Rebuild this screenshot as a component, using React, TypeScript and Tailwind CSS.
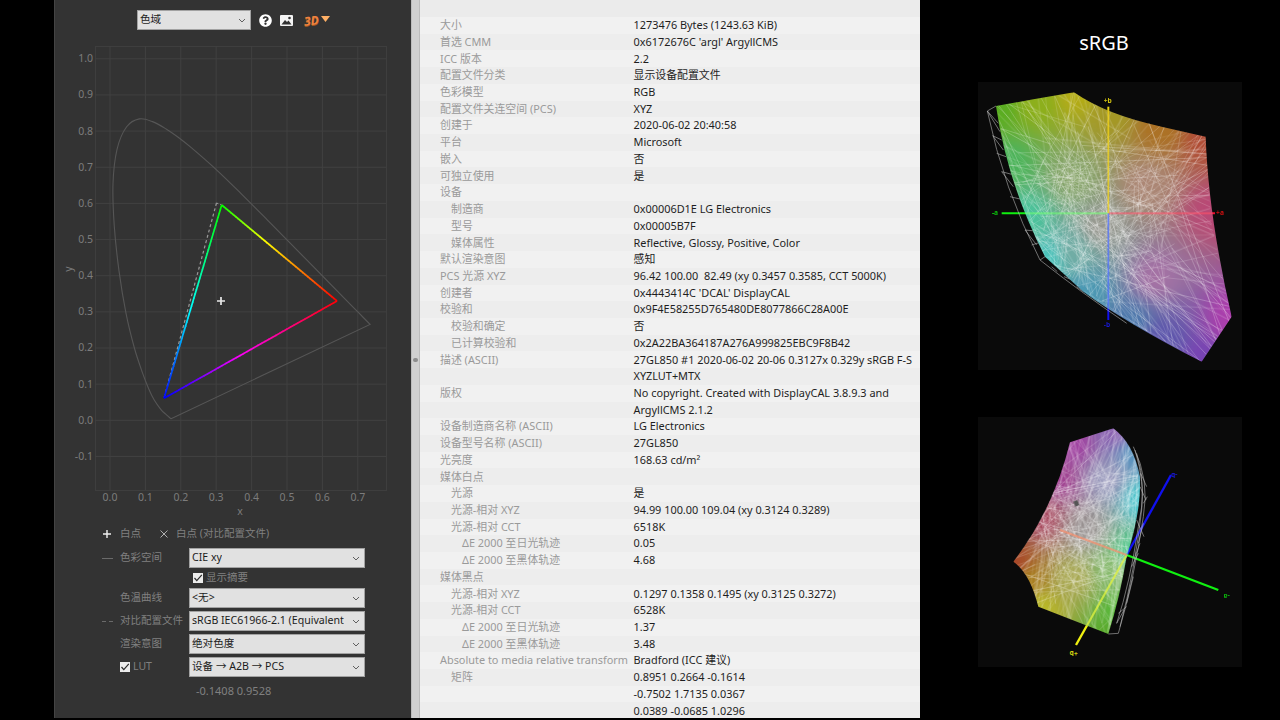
import React from "react";
import { FaQuestionCircle } from "react-icons/fa";

type P = [number, number];
const FONT = "[font-family:'Noto_Sans','Noto_Sans_CJK_SC',sans-serif]";

const rows: [string, string, number][] = [
  ["大小", "1273476 Bytes (1243.63 KiB)", 0],
  ["首选 CMM", "0x6172676C 'argl' ArgyllCMS", 0],
  ["ICC 版本", "2.2", 0],
  ["配置文件分类", "显示设备配置文件", 0],
  ["色彩模型", "RGB", 0],
  ["配置文件关连空间 (PCS)", "XYZ", 0],
  ["创建于", "2020-06-02 20:40:58", 0],
  ["平台", "Microsoft", 0],
  ["嵌入", "否", 0],
  ["可独立使用", "是", 0],
  ["设备", "", 0],
  ["制造商", "0x00006D1E LG Electronics", 1],
  ["型号", "0x00005B7F", 1],
  ["媒体属性", "Reflective, Glossy, Positive, Color", 1],
  ["默认渲染意图", "感知", 0],
  ["PCS 光源 XYZ", "96.42 100.00  82.49 (xy 0.3457 0.3585, CCT 5000K)", 0],
  ["创建者", "0x4443414C 'DCAL' DisplayCAL", 0],
  ["校验和", "0x9F4E58255D765480DE8077866C28A00E", 0],
  ["校验和确定", "否", 1],
  ["已计算校验和", "0x2A22BA364187A276A999825EBC9F8B42", 1],
  ["描述 (ASCII)", "27GL850 #1 2020-06-02 20-06 0.3127x 0.329y sRGB F-S", 0],
  ["", "XYZLUT+MTX", 0],
  ["版权", "No copyright. Created with DisplayCAL 3.8.9.3 and", 0],
  ["", "ArgyllCMS 2.1.2", 0],
  ["设备制造商名称 (ASCII)", "LG Electronics", 0],
  ["设备型号名称 (ASCII)", "27GL850", 0],
  ["光亮度", "168.63 cd/m²", 0],
  ["媒体白点", "", 0],
  ["光源", "是", 1],
  ["光源-相对 XYZ", "94.99 100.00 109.04 (xy 0.3124 0.3289)", 1],
  ["光源-相对 CCT", "6518K", 1],
  ["ΔE 2000 至日光轨迹", "0.05", 2],
  ["ΔE 2000 至黑体轨迹", "4.68", 2],
  ["媒体黑点", "", 0],
  ["光源-相对 XYZ", "0.1297 0.1358 0.1495 (xy 0.3125 0.3272)", 1],
  ["光源-相对 CCT", "6528K", 1],
  ["ΔE 2000 至日光轨迹", "1.37", 2],
  ["ΔE 2000 至黑体轨迹", "3.48", 2],
  ["Absolute to media relative transform", "Bradford (ICC 建议)", 0],
  ["矩阵", "0.8951 0.2664 -0.1614", 1],
  ["", "-0.7502 1.7135 0.0367", 0],
  ["", "0.0389 -0.0685 1.0296", 0],
];

const locus: P[] = [
  [0.1741, 0.005], [0.1714, 0.0051], [0.1644, 0.0109], [0.1566, 0.0177], [0.144, 0.0297], [0.1241, 0.0578],
  [0.1096, 0.0868], [0.0913, 0.1327], [0.0687, 0.2007], [0.0454, 0.295], [0.0255, 0.4127], [0.012, 0.5384],
  [0.0085, 0.6548], [0.02, 0.7502], [0.047, 0.812], [0.083, 0.8338], [0.12, 0.8262], [0.1585, 0.8059],
  [0.1945, 0.7816], [0.2296, 0.7543], [0.3016, 0.6923], [0.3731, 0.6245], [0.4441, 0.5547], [0.5125, 0.4866],
  [0.5752, 0.4242], [0.627, 0.3725], [0.6658, 0.334], [0.6915, 0.3083], [0.719, 0.2809], [0.7347, 0.2653],
];
const px = (x: number) => 110 + x * 354;
const py = (y: number) => 420.3 - y * 361.5;

function locusPath() {
  const pts: P[] = locus.map((p) => [px(p[0]), py(p[1])]);
  let d = `M${pts[0][0]} ${pts[0][1]}`;
  for (let i = 0; i < pts.length - 1; i++) {
    const p0 = pts[Math.max(i - 1, 0)];
    const p1 = pts[i];
    const p2 = pts[i + 1];
    const p3 = pts[Math.min(i + 2, pts.length - 1)];
    d += ` C${p1[0] + (p2[0] - p0[0]) / 6} ${p1[1] + (p2[1] - p0[1]) / 6} ${p2[0] - (p3[0] - p1[0]) / 6} ${p2[1] - (p3[1] - p1[1]) / 6} ${p2[0]} ${p2[1]}`;
  }
  return d + " Z";
}

function GradientEdge({ a, b, hue }: { a: P; b: P; hue: (s: number) => number }) {
  const n = 48;
  const segs = [];
  for (let i = 0; i < n; i++) {
    const s0 = i / n;
    const s1 = (i + 1.15) / n;
    segs.push(
      <line
        key={i}
        x1={a[0] + (b[0] - a[0]) * s0}
        y1={a[1] + (b[1] - a[1]) * s0}
        x2={a[0] + (b[0] - a[0]) * Math.min(s1, 1)}
        y2={a[1] + (b[1] - a[1]) * Math.min(s1, 1)}
        stroke={`hsl(${hue(s0)}, 100%, 50%)`}
        strokeWidth={1.7}
      />
    );
  }
  return <g>{segs}</g>;
}

function Chart() {
  const R: P = [337, 301];
  const G: P = [221.7, 205];
  const B: P = [164, 398.3];
  const xt = [0, 1, 2, 3, 4, 5, 6, 7];
  const yt = [10, 9, 8, 7, 6, 5, 4, 3, 2, 1, 0, -1];
  return (
    <svg viewBox="54 40 357 486" className="block w-[357px] h-[486px] shrink-0">
      <rect x={95.5} y={46.5} width={291} height={444} fill="none" stroke="#3e3e3e" />
      {xt.map((t) => (
        <g key={t}>
          <line x1={px(t / 10)} x2={px(t / 10)} y1={46} y2={490} stroke="#414141" />
          <text x={px(t / 10)} y={500.5} textAnchor="middle" fontSize={10.5} fill="#7c7c7c">
            {(t / 10).toFixed(1)}
          </text>
        </g>
      ))}
      {yt.map((t) => (
        <g key={t}>
          <line x1={95} x2={386} y1={py(t / 10)} y2={py(t / 10)} stroke="#414141" />
          <text x={93} y={py(t / 10) + 3.4} textAnchor="end" fontSize={10.5} fill="#7c7c7c">
            {(t / 10).toFixed(1)}
          </text>
        </g>
      ))}
      <text x={240} y={515} textAnchor="middle" fontSize={10.5} fill="#7c7c7c">x</text>
      <text x={0} y={0} transform="translate(72 269) rotate(-90)" textAnchor="middle" fontSize={10.5} fill="#7c7c7c">y</text>
      <path d={locusPath()} fill="none" stroke="#565656" strokeWidth={1.1} />
      <polyline points={`216.5,203 164,398.3`} fill="none" stroke="#9a9a9a" strokeWidth={1.2} strokeDasharray="3 2.5" />
      <line x1={216.5} y1={203} x2={221.7} y2={205} stroke="#9a9a9a" strokeWidth={1} strokeDasharray="2 2" />
      <GradientEdge a={R} b={G} hue={(s) => (s < 0.61 ? (60 * s) / 0.61 : 60 + (60 * (s - 0.61)) / 0.39)} />
      <GradientEdge a={G} b={B} hue={(s) => (s < 0.53 ? 120 + (60 * s) / 0.53 : 180 + (60 * (s - 0.53)) / 0.47)} />
      <GradientEdge a={B} b={R} hue={(s) => (s < 0.42 ? 240 + (60 * s) / 0.42 : 300 + (60 * (s - 0.42)) / 0.58)} />
      <path d="M221 297v8M217 301h8" stroke="#e8e8e8" strokeWidth={1.7} fill="none" />
    </svg>
  );
}

function Chevron() {
  return (
    <svg width="8" height="5" viewBox="0 0 8 5" className="shrink-0">
      <path d="M1 1l3 3 3-3" fill="none" stroke="#606060" strokeWidth={1} />
    </svg>
  );
}

function Select({ text, w = "w-[176px]" }: { text: string; w?: string }) {
  return (
    <div
      className={`${w} h-5 shrink-0 flex items-center justify-between bg-[#e1e1e1] border border-[#a2a2a2] pl-[2px] pr-[4px] text-[#1c1c1c] text-[10.6px] whitespace-nowrap overflow-hidden`}
    >
      <span className="overflow-hidden">{text}</span>
      <Chevron />
    </div>
  );
}

function Check() {
  return (
    <span className="inline-flex w-[10px] h-[10px] items-center justify-center bg-[#ececec] shrink-0">
      <svg width="10" height="10" viewBox="0 0 10 10">
        <path d="M1.5 5l2.3 2.6L8.8 1.8" fill="none" stroke="#2a2a2a" strokeWidth={1.2} />
      </svg>
    </span>
  );
}

function ControlRow({ marker, label, text }: { marker?: React.ReactNode; label: React.ReactNode; text: string }) {
  return (
    <div className="flex items-center pl-[48px] h-5">
      <div className="w-[18px] shrink-0 flex items-center text-[#6a6a6a]">{marker}</div>
      <div className="w-[69px] shrink-0 text-[#808080] text-[10.5px] whitespace-nowrap flex items-center gap-[3px]">{label}</div>
      <Select text={text} />
    </div>
  );
}

function rng(seed: number) {
  let s = seed;
  return () => {
    s = (s * 1664525 + 1013904223) >>> 0;
    return s / 4294967296;
  };
}
function hex(c: string): number[] {
  return [parseInt(c.slice(1, 3), 16), parseInt(c.slice(3, 5), 16), parseInt(c.slice(5, 7), 16)];
}

type Ctl = [number, number, string];
type Axis = { a: P; b: P; color: string; inner: string };
type Lab = { x: number; y: number; t: string; c: string; r?: number };

function Gamut(props: {
  id: string;
  h: number;
  vbH: number;
  outline: string;
  boundary: P[];
  ctl: Ctl[];
  center: P;
  wires: string[];
  axes: Axis[];
  labels: Lab[];
  seed: number;
  extra?: React.ReactNode;
  spread: number;
  axisW: number;
}) {
  const { id, h, vbH, outline, boundary, ctl, center, wires, axes, labels, seed, extra, spread, axisW } = props;
  const data = React.useMemo(() => {
    const xs = boundary.map((p) => p[0]);
    const ys = boundary.map((p) => p[1]);
    const cells: { x: number; y: number; f: string }[] = [];
    const step = 15;
    const cc = ctl.map((c) => ({ x: c[0], y: c[1], rgb: hex(c[2]) }));
    for (let x = Math.min(...xs) - 30; x < Math.max(...xs) + 30; x += step) {
      for (let y = Math.min(...ys) - 30; y < Math.max(...ys) + 30; y += step) {
        let sw = 0;
        const sum = [0, 0, 0];
        for (const c of cc) {
          const d = (c.x - x) ** 2 + (c.y - y) ** 2 + 40;
          const w = 1 / d ** 1.4;
          sw += w;
          sum[0] += c.rgb[0] * w;
          sum[1] += c.rgb[1] * w;
          sum[2] += c.rgb[2] * w;
        }
        cells.push({ x, y, f: `rgb(${(sum[0] / sw) | 0},${(sum[1] / sw) | 0},${(sum[2] / sw) | 0})` });
      }
    }
    const r = rng(seed);
    const lines: { a: P; b: P; o: number }[] = [];
    const bpt = (): P => {
      const i = Math.floor(r() * boundary.length);
      const a = boundary[i];
      const b = boundary[(i + 1) % boundary.length];
      const t = r();
      return [a[0] + (b[0] - a[0]) * t, a[1] + (b[1] - a[1]) * t];
    };
    for (let i = 0; i < 210; i++) {
      const a = bpt();
      const c: P = [center[0] + (r() - 0.5) * spread * 1.3, center[1] + (r() - 0.5) * spread * 1.5];
      const k = 0.55 + r() * 1.0;
      lines.push({ a, b: [a[0] + (c[0] - a[0]) * k, a[1] + (c[1] - a[1]) * k], o: 0.16 + r() * 0.2 });
    }
    for (let i = 0; i < 220; i++) {
      const a: P = [center[0] + (r() - 0.5) * spread, center[1] + (r() - 0.5) * spread];
      const ang = r() * Math.PI * 2;
      const l = 30 + r() * 90;
      lines.push({ a, b: [a[0] + Math.cos(ang) * l, a[1] + Math.sin(ang) * l], o: 0.14 + r() * 0.2 });
    }
    return { cells, lines, step };
  }, []);
  return (
    <svg viewBox={`24 21 792 ${vbH}`} className="block w-[264px] shrink-0 bg-[#0a0a0a]" style={{ height: h }}>
      <defs>
        <clipPath id={`${id}-clip`}>
          <path d={outline} />
        </clipPath>
        <filter id={`${id}-blur`} x="-5%" y="-5%" width="110%" height="110%">
          <feGaussianBlur stdDeviation="9" />
        </filter>
        <filter id={`${id}-soft`} x="-5%" y="-5%" width="110%" height="110%">
          <feGaussianBlur stdDeviation="0.9" />
        </filter>
      </defs>
      {axes.map((a, i) => (
        <line key={i} x1={a.a[0]} y1={a.a[1]} x2={a.b[0]} y2={a.b[1]} stroke={a.color} strokeWidth={axisW} />
      ))}
      {wires.map((d, i) => (
        <path key={i} d={d} fill="none" stroke="#c4c4c4" strokeWidth={2.2} opacity={0.75} filter={`url(#${id}-soft)`} />
      ))}
      <g clipPath={`url(#${id}-clip)`}>
        <g filter={`url(#${id}-blur)`}>
          {data.cells.map((c, i) => (
            <rect key={i} x={c.x} y={c.y} width={data.step + 1} height={data.step + 1} fill={c.f} />
          ))}
        </g>
        <g filter={`url(#${id}-soft)`}>
          {data.lines.map((l, i) => (
            <line key={i} x1={l.a[0]} y1={l.a[1]} x2={l.b[0]} y2={l.b[1]} stroke="#fff" strokeWidth={2.2} opacity={l.o} />
          ))}
        </g>
        {extra}
        {axes.map((a, i) => (
          <line key={i} x1={a.a[0]} y1={a.a[1]} x2={a.b[0]} y2={a.b[1]} stroke={a.inner} strokeWidth={axisW - 1} opacity={0.75} />
        ))}
      </g>
      {labels.map((l, i) => (
        <text
          key={i}
          x={0}
          y={0}
          transform={`translate(${l.x} ${l.y}) rotate(${l.r ?? 0})`}
          fontSize={20}
          fontWeight={700}
          fill={l.c}
          textAnchor="middle"
        >
          {l.t}
        </text>
      ))}
    </svg>
  );
}

export default function App() {
  return (
    <div className={`w-[1280px] h-[720px] bg-black flex overflow-hidden ${FONT}`}>
      <div className="w-[54px] shrink-0" />
      <div className="w-[357px] h-[718px] shrink-0 bg-[#333333] shadow-[inset_1px_0_0_#444444] flex flex-col overflow-hidden">
        <div className="h-10 shrink-0 flex items-start pt-[10px] pl-[83px]">
          <Select text="色域" w="w-[114px]" />
          <FaQuestionCircle className="ml-[8px] mt-[4px] text-white w-[13px] h-[13px]" />
          <svg width="13" height="11" viewBox="0 0 13 11" className="ml-[8px] mt-[5px]">
            <rect width="13" height="11" rx="1" fill="#f4f4f4" />
            <path d="M1.5 9.5L5 5l2 2 1.5-1.5L11.5 9.5z" fill="#333" />
            <circle cx="9.500" cy="3" r="1.3" fill="#333" />
          </svg>
          <span className="ml-[11px] mt-[2px] text-[12px] leading-[17px] font-bold italic text-[#ee8240] -rotate-6 [text-shadow:0_1px_0_#a85a20]">3D</span>
          <svg width="9" height="6" viewBox="0 0 9 6" className="ml-[2px] mt-[6px]">
            <path d="M0 0h9L4.500 6z" fill="#ffb066" />
          </svg>
        </div>
        <Chart />
        <div className="h-4 shrink-0 flex items-center pl-[48px] text-[10.5px] text-[#808080] whitespace-nowrap">
          <svg width="10" height="10" viewBox="0 0 10 10" className="shrink-0">
            <path d="M5 1v8M1 5h8" stroke="#f0f0f0" strokeWidth={1.4} />
          </svg>
          <span className="ml-[8px]">白点</span>
          <svg width="10" height="10" viewBox="0 0 10 10" className="ml-[18px] shrink-0">
            <path d="M1.500 1.500l7 7M8.500 1.500l-7 7" stroke="#b0b0b0" strokeWidth={1} />
          </svg>
          <span className="ml-[7px]">白点 (对比配置文件)</span>
        </div>
        <div className="mt-[6px] shrink-0">
          <ControlRow marker={<span className="block w-[11px] h-px bg-[#6a6a6a]" />} label="色彩空间" text="CIE xy" />
        </div>
        <div className="h-5 shrink-0 flex items-center gap-[3px] pl-[139px] text-[10.5px] text-[#808080]">
          <Check />
          <span>显示摘要</span>
        </div>
        <div className="flex flex-col gap-[3px] shrink-0">
          <ControlRow label="色温曲线" text="<无>" />
          <ControlRow
            marker={
              <span className="flex gap-[3px]">
                <span className="block w-1 h-px bg-[#6a6a6a]" />
                <span className="block w-1 h-px bg-[#6a6a6a]" />
              </span>
            }
            label="对比配置文件"
            text="sRGB IEC61966-2.1 (Equivalent"
          />
          <ControlRow label="渲染意图" text="绝对色度" />
          <ControlRow
            label={
              <>
                <Check />
                <span>LUT</span>
              </>
            }
            text="设备 → A2B → PCS"
          />
        </div>
        <div className="mt-[6px] pl-[142px] h-4 flex items-center text-[11px] text-[#808080] shrink-0">-0.1408 0.9528</div>
      </div>

      <div className="w-[9px] h-[718px] shrink-0 bg-[#d0d0d0] border-x border-[#bcbcbc] flex items-center justify-center pt-[2px]">
        <span className="block w-[5px] h-[4px] rounded-full bg-[#8c8c8c]" />
      </div>

      <div className="w-[500px] h-[718px] shrink-0 bg-[#ebebeb] overflow-hidden flex flex-col">
        <div className="h-[17px] shrink-0" />
        {rows.map((r, i) => (
          <div
            key={i}
            className={`h-[16.72px] shrink-0 flex items-center pl-5 text-[10.9px] whitespace-nowrap ${
              i % 2 === 0 ? "bg-[#f1f1f1]" : "bg-[#ededed]"
            }`}
          >
            <div
              className={`w-[193.500px] shrink-0 text-[#9a9a9a] ${
                r[2] === 1 ? "pl-[11px]" : r[2] === 2 ? "pl-[22px]" : ""
              }`}
            >
              {r[0]}
            </div>
            <div className="text-[#1e1e1e] whitespace-pre">{r[1]}</div>
          </div>
        ))}
      </div>

      <div className="flex-1 flex flex-col pl-[58px]">
        <div className="h-[82px] shrink-0 w-[252px] flex items-center justify-center pt-1 text-white text-[20px]">sRGB</div>
        <Gamut
          id="g1"
          h={288}
          vbH={864}
          seed={7}
          axisW={6}
          center={[390, 430]}
          spread={320}
          outline="M78 93 L190 73 L312 52 Q410 120 575 155 L707 185 Q715 420 785 725 L695 860 Q470 745 340 650 L225 545 Q110 320 78 93 Z"
          boundary={[[78, 93], [312, 52], [575, 155], [707, 185], [725, 450], [785, 725], [695, 860], [470, 735], [225, 545], [130, 330]]}
          ctl={[
            [78, 93, "#5cb024"], [190, 75, "#90b31c"], [312, 52, "#b8b018"], [415, 110, "#a89c28"], [560, 150, "#b07426"],
            [707, 185, "#b54c36"], [720, 400, "#bd4a78"], [785, 725, "#b03eb0"], [695, 860, "#7a44b8"], [570, 790, "#6058b0"],
            [470, 735, "#4e7cb0"], [340, 650, "#4c9cb8"], [225, 545, "#4cc8c0"], [160, 420, "#4cc8a0"], [110, 260, "#4cb85c"],
            [380, 450, "#9c9c94"], [300, 300, "#8aa86c"], [520, 320, "#b08a78"], [300, 520, "#74b0a8"], [550, 600, "#a874a8"],
          ]}
          axes={[
            { a: [95, 415], b: [415, 415], color: "#10f010", inner: "#70ff70" },
            { a: [415, 415], b: [735, 415], color: "#f01030", inner: "#ff5068" },
            { a: [415, 95], b: [415, 415], color: "#e8d010", inner: "#f4d418" },
            { a: [415, 415], b: [415, 735], color: "#1010f0", inner: "#5070ff" },
          ]}
          wires={[
            "M78 93 L52 108 Q100 340 210 555 L225 545",
            "M210 555 Q330 650 470 745",
            "M52 108 L85 145 M52 108 L90 170 M68 182 L95 195 M68 182 L100 225 M80 235 L108 245 M95 290 L125 298 M95 290 L130 335 M120 365 L150 372 M165 465 L195 468 M165 465 L200 510 M185 510 L210 502 M245 575 L262 590 M282 605 L300 612 M320 635 L340 650",
          ]}
          labels={[
            { x: 75, y: 421, t: "-a", c: "#0cc00c" },
            { x: 750, y: 421, t: "+a", c: "#d01010" },
            { x: 413, y: 85, t: "+b", c: "#d0c010" },
            { x: 411, y: 757, t: "-b", c: "#1818d0" },
          ]}
        />
        <div className="h-[47px] shrink-0" />
        <Gamut
          id="g2"
          h={250}
          vbH={750}
          seed={31}
          axisW={7}
          center={[350, 360]}
          spread={260}
          outline="M300 97 L430 55 Q490 100 510 200 Q515 300 470 440 Q450 560 415 672 L205 590 Q180 490 130 455 Q250 300 300 97 Z"
          boundary={[[300, 97], [430, 55], [490, 110], [510, 240], [470, 440], [415, 672], [205, 590], [130, 455], [225, 290]]}
          ctl={[
            [300, 97, "#a844a8"], [430, 55, "#9064b8"], [490, 120, "#5c9cc8"], [510, 260, "#4cd0d8"], [480, 420, "#4cd090"],
            [440, 600, "#5cc03c"], [415, 672, "#5cb02c"], [205, 590, "#c0c02c"], [170, 500, "#b08424"], [130, 455, "#b04c2c"],
            [210, 320, "#b04c64"], [260, 200, "#a84498"], [340, 350, "#a09898"], [300, 500, "#b0b054"], [400, 200, "#a0a0c4"],
            [420, 470, "#90c474"],
          ]}
          axes={[
            { a: [470, 435], b: [603, 195], color: "#1010f0", inner: "#5080ff" },
            { a: [470, 435], b: [745, 540], color: "#10f010", inner: "#80ff80" },
            { a: [470, 435], b: [318, 705], color: "#f0f010", inner: "#e0f040" },
            { a: [270, 360], b: [470, 435], color: "#f08060", inner: "#f09070" },
          ]}
          wires={[
            "M490 110 Q540 210 520 320 Q490 520 445 670 L415 672",
            "M500 130 Q532 230 505 350 Q480 520 440 640",
            "M495 120 Q525 220 515 300 Q495 480 450 650",
            "M512 190 L530 230 M520 280 L532 260 M505 400 L520 340 M510 230 L528 270 M495 440 L510 400 M500 330 L522 380 M485 470 L505 430 M470 580 L490 500 M445 610 L470 590 M440 640 L462 600",
          ]}
          extra={<polygon points="310,275 322,270 328,285 316,290" fill="#555555" />}
          labels={[
            { x: 613, y: 190, t: "-b", c: "#1818c0", r: 180 },
            { x: 770, y: 552, t: "-a", c: "#0cb00c", r: 180 },
            { x: 311, y: 722, t: "+b", c: "#d0d010", r: 180 },
          ]}
        />
      </div>
    </div>
  );
}
